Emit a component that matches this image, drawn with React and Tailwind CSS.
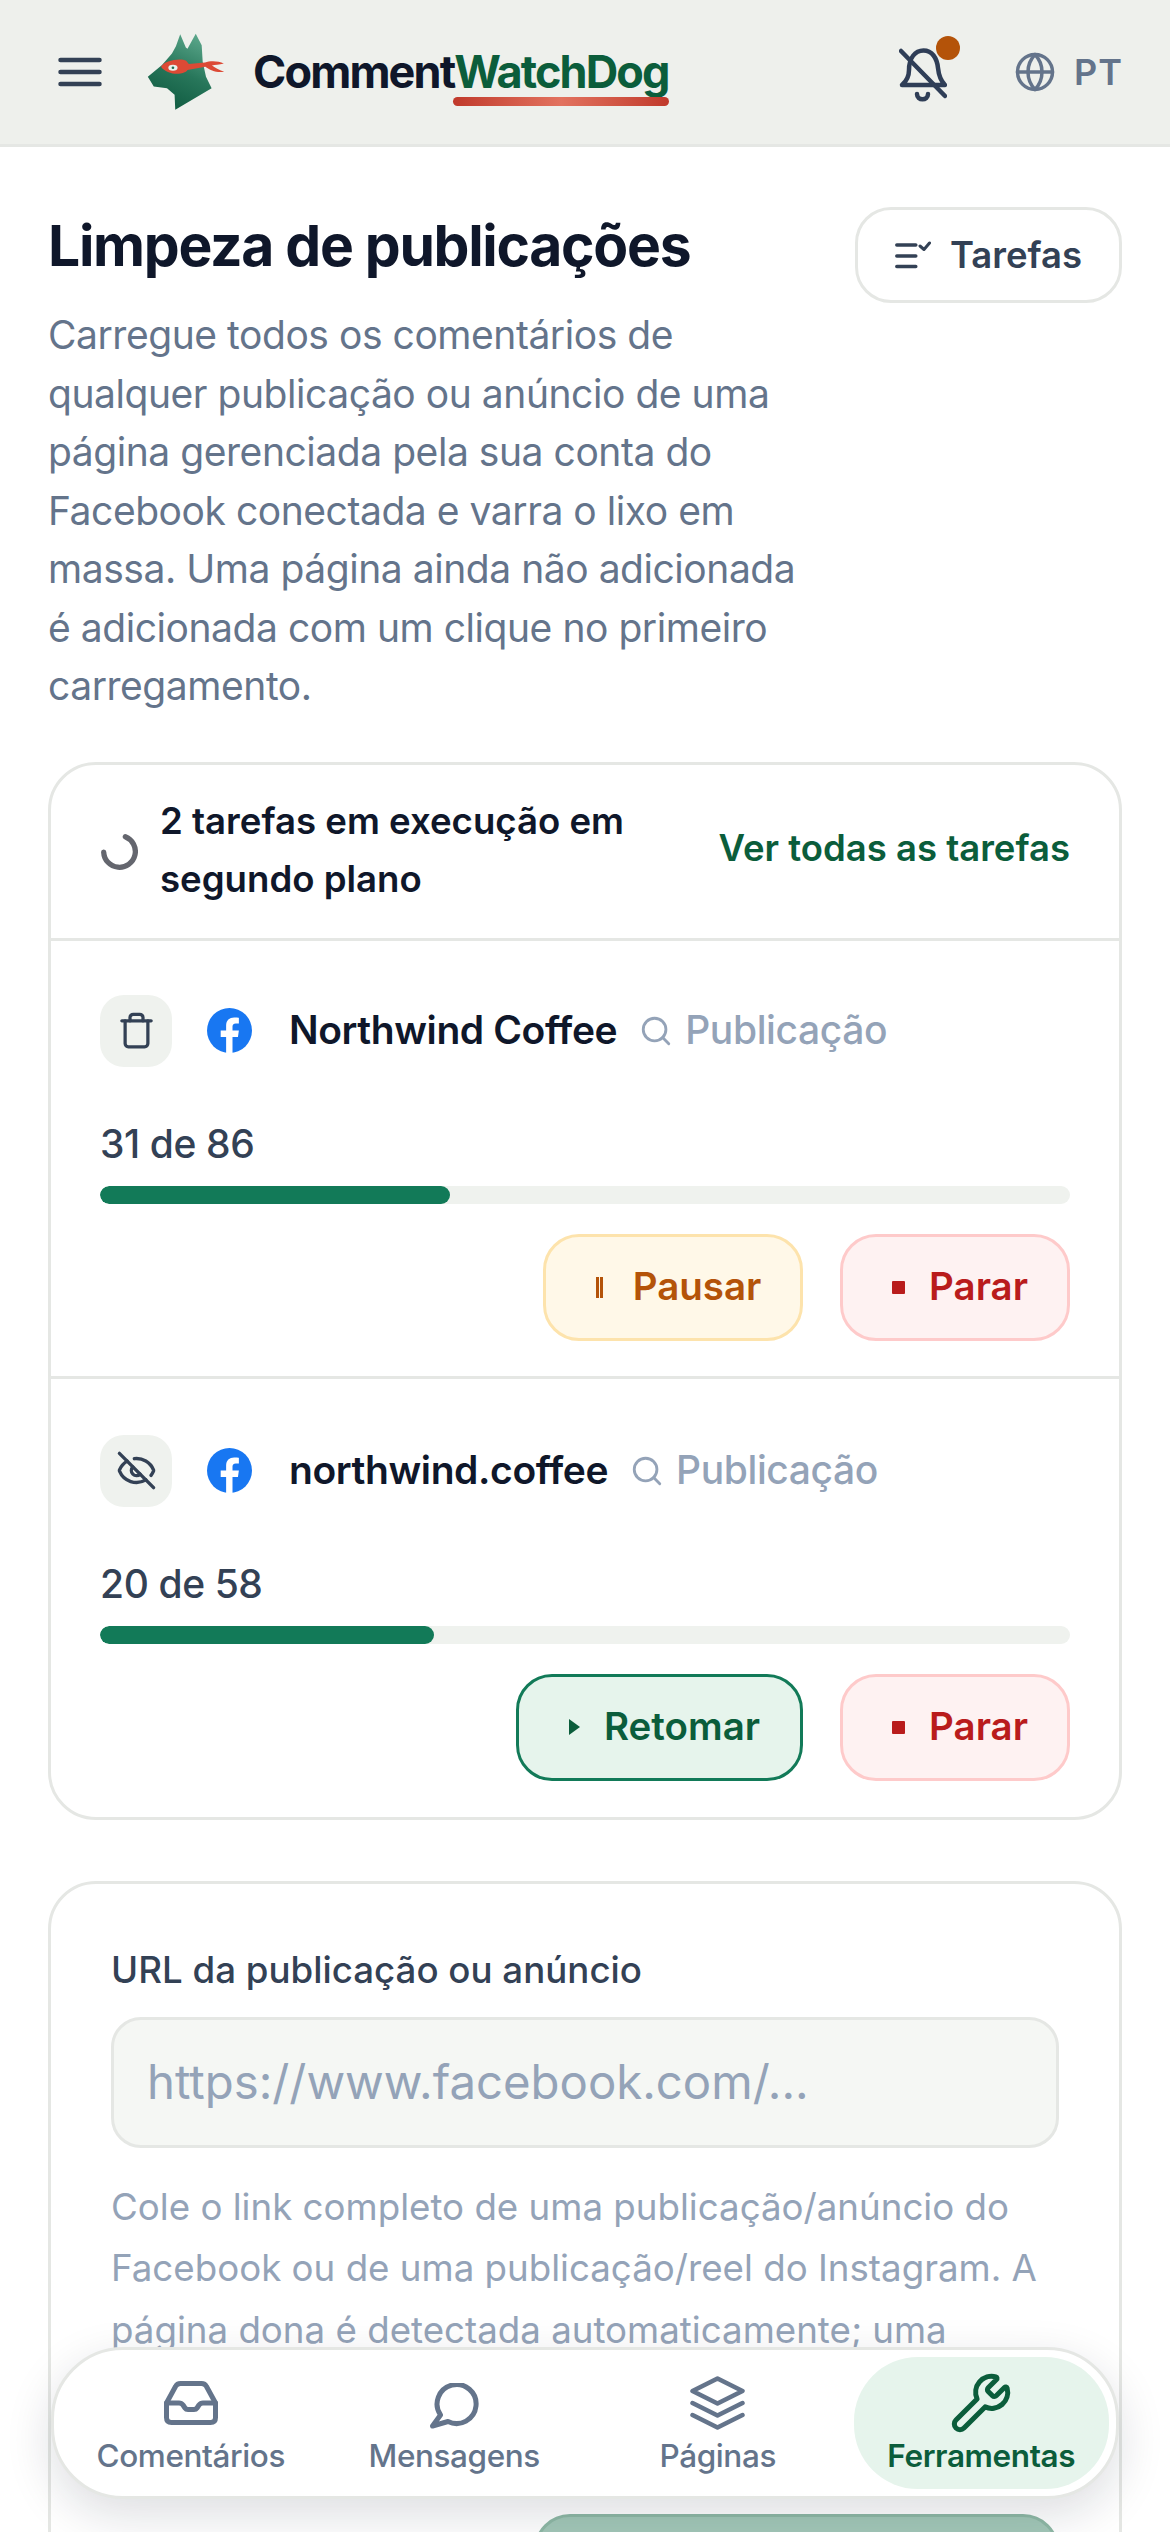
import { EyeOff, Globe, Search, Trash, Wrench } from "lucide-react";

const InboxIcon = () => (
  <svg viewBox="0 0 54 44" fill="none" stroke="currentColor" strokeWidth="5" strokeLinecap="round" strokeLinejoin="round" className="w-[54px] h-[44px]">
    <path d="M2.500 22 L11.500 5.500 Q13 2.500 16.500 2.500 H37.500 Q41 2.500 42.500 5.500 L51.500 22 V36.500 Q51.500 41.500 46.500 41.500 H7.500 Q2.500 41.500 2.500 36.500 Z" />
    <path d="M2.500 22 H15 Q17.500 22 19 24 L21 27 Q22 28.500 24 28.500 H30 Q32 28.500 33 27 L35 24 Q36.500 22 39 22 H51.500" />
  </svg>
);

const ChatIcon = () => (
  <svg viewBox="0 0 50 46" fill="none" stroke="currentColor" strokeWidth="5" strokeLinecap="round" strokeLinejoin="round" className="w-[50px] h-[46px] mt-[5px]">
    <path d="M11.500 32 A19.500 19.500 0 1 1 19 38.500 L3.500 43 Z" />
  </svg>
);

const LayersIcon = () => (
  <svg viewBox="0 0 55 54" fill="none" stroke="currentColor" strokeWidth="4.500" strokeLinecap="round" strokeLinejoin="round" className="w-[55px] h-[54px]">
    <path d="M27.500 2.500 L52.500 15 L27.500 27.500 L2.500 15 Z" />
    <path d="M2.500 27 L27.500 39.500 L52.500 27" />
    <path d="M2.500 39 L27.500 51.500 L52.500 39" />
  </svg>
);

const WrenchIcon = () => <Wrench className="w-[64px] h-[64px] -my-[4px]" strokeWidth={1.900} />;

const navItems = [
  { label: "Comentários", icon: InboxIcon },
  { label: "Mensagens", icon: ChatIcon },
  { label: "Páginas", icon: LayersIcon },
  { label: "Ferramentas", icon: WrenchIcon, active: true },
];

const DogLogo = () => (
  <svg viewBox="50 38 235 236" className="w-[78px] h-[78px] shrink-0">
    <defs>
      <linearGradient id="dogFill" x1="0.7" y1="0" x2="0.3" y2="1">
        <stop offset="0" stopColor="#5aa68a" />
        <stop offset="0.5" stopColor="#27765a" />
        <stop offset="1" stopColor="#0f5a40" />
      </linearGradient>
    </defs>
    <path d="M52 170 L95 135 L125 100 L137 78 L150 42 L167 82 L172 86 L197 40 L215 75 L218 125 L228 170 L245 205 L135 270 L133 225 L110 205 L70 200 Z" fill="url(#dogFill)" />
    <path d="M92 140 C100 122 150 112 168 122 L176 132 L225 127 C240 122 265 122 282 130 C268 134 255 134 246 136 C256 144 270 150 283 155 C262 160 240 150 226 140 L172 150 C160 168 108 165 92 140 Z" fill="#dc4a35" />
    <ellipse cx="128" cy="143" rx="14" ry="9" fill="#e8f2ec" />
    <circle cx="128" cy="143" r="4" fill="#1d6b50" />
  </svg>
);

const FacebookIcon = () => (
  <svg viewBox="0 0 24 24" className="w-[45px] h-[45px] shrink-0">
    <circle cx="12" cy="12" r="12" fill="#1877f2" />
    <path d="M13.600 24v-8.600h2.900l.5-3.400h-3.400V9.900c0-1 .4-1.700 1.800-1.700H17V5.200c-.4-.1-1.400-.2-2.500-.2-2.500 0-4.300 1.500-4.300 4.300V12H7.300v3.400h2.900V24z" fill="#ffffff" />
  </svg>
);

const MutedBell = () => (
  <svg viewBox="0 0 48 54" fill="none" stroke="#2f3e57" strokeWidth="4.500" strokeLinecap="round" strokeLinejoin="round" className="w-[48px] h-[54px]">
    <path d="M3 37 C6.500 34 10 30 10 22 C10 10 16 2.500 24.500 2.500 C33 2.500 38 10 39 20 C40 30 43 34 46 37 Z" />
    <path d="M2 3 L46 48" />
    <path d="M18 46 C18 53 29 53 29 46" />
  </svg>
);

// three bars with a small tick, used on the tasks button
const TaskListIcon = () => (
  <svg viewBox="0 0 36 28" fill="none" stroke="#334155" strokeWidth="3.500" strokeLinecap="round" strokeLinejoin="round" className="w-[36px] h-[28px] shrink-0">
    <path d="M1.800 4h19M1.800 15h19M1.800 25.500h19" />
    <path d="M25 5l4 3.500 5.500-6.500" strokeWidth="3" />
  </svg>
);

const TaskRow = ({ icon: Icon, iconClass, name, count, total, action }) => (
  <div>
    <div className="flex items-center h-[72px]">
      <div className="w-[72px] h-[72px] rounded-[24px] bg-[#eff2ee] flex items-center justify-center shrink-0">
        <Icon className={`${iconClass} text-[#334155]`} strokeWidth={2} />
      </div>
      <div className="ml-[35px]"><FacebookIcon /></div>
      <span className="ml-[37px] text-[39px] font-semibold text-[#0f172a] tracking-[-0.4px]">{name}</span>
      <Search className="ml-[22px] w-[34px] h-[34px] text-[#94a3b8]" strokeWidth={2} />
      <span className="ml-[12px] text-[39px] font-medium text-[#94a3b8] tracking-[-0.4px]">Publicação</span>
    </div>
    <p className="mt-[48px] text-[39px] leading-[58px] font-medium text-[#334155] tracking-[-0.4px]">{count} de {total}</p>
    <div className="mt-[13px] h-[18px] rounded-full bg-[#eff2ee] overflow-hidden">
      <div className="h-full rounded-full bg-[#127a58]" style={{ width: `${(count / total) * 100}%` }} />
    </div>
    <div className="mt-[30px] flex justify-end gap-[37px]">
      {action === "pause" ? (
        <button className="w-[260px] h-[107px] rounded-[36px] border-[3px] border-[#fde3ac] bg-[#fff8e8] text-[#b45309] flex items-center justify-center gap-[30px] text-[38.500px] font-semibold">
          <span className="w-[18px] h-[21px] flex justify-end gap-px">
            <span className="w-[3px] h-full bg-current" />
            <span className="w-[3px] h-full bg-current" />
          </span>
          Pausar
        </button>
      ) : (
        <button className="w-[287px] h-[107px] pl-[10px] rounded-[36px] border-[3px] border-[#127a58] bg-[#e6f4ec] text-[#0b5d3b] flex items-center justify-center gap-[24px] text-[38.500px] font-semibold">
          <svg viewBox="0 0 11 16" className="w-[11px] h-[16px] fill-current"><path d="M0 0 L11 8 L0 16 Z" /></svg>
          Retomar
        </button>
      )}
      <button className="w-[230px] h-[107px] pl-[10px] rounded-[36px] border-[3px] border-[#fecaca] bg-[#fef2f2] text-[#b91c1c] flex items-center justify-center gap-[24px] text-[38.500px] font-semibold">
        <span className="w-[13px] h-[13px] rounded-[1px] bg-current" />
        Parar
      </button>
    </div>
  </div>
);

export default function App() {
  return (
    <div className="relative h-[2532px] overflow-hidden bg-white font-['Inter',sans-serif]">
      {/* top bar */}
      <header className="h-[147px] bg-[#eef0ec] border-b-[3px] border-[#e5e7e4] flex items-center pl-[58px] pr-[47px]">
        <svg viewBox="0 0 44 30" fill="none" stroke="#334155" strokeWidth="4.500" strokeLinecap="round" className="w-[44px] h-[30px] shrink-0">
          <path d="M2.500 3h39M2.500 15h39M2.500 27h39" />
        </svg>
        <div className="ml-[45px]"><DogLogo /></div>
        <div className="relative ml-[28px] mt-[-2px] text-[45px] font-bold tracking-[-1.850px] text-[#0f172a] leading-none">
          Comment<span className="text-[#0b5d3b]">WatchDog</span>
          <div className="absolute right-0 bottom-[-12px] w-[216px] h-[9px] rounded-full bg-gradient-to-r from-[#c0392b] via-[#e2725f] to-[#c0392b]" />
        </div>
        <div className="relative ml-auto mt-[6px]">
          <MutedBell />
          <span className="absolute right-[-13px] top-[-12px] w-[24px] h-[24px] rounded-full bg-[#b45309]" />
        </div>
        <Globe className="ml-[67px] w-[42px] h-[42px] text-[#64748b]" strokeWidth={2} />
        <span className="ml-[18px] text-[36px] font-semibold text-[#64748b] tracking-[1px]">PT</span>
      </header>

      <main className="px-[48px] pt-[63px]">
        {/* heading */}
        <div className="flex items-start justify-between">
          <div className="w-[760px]">
            <h1 className="text-[57px] leading-[72px] font-bold text-[#0f172a] tracking-[-1.300px]">Limpeza de publicações</h1>
            <p className="mt-[24px] text-[39px] leading-[58.500px] text-[#64748b] tracking-[-0.45px]">
              Carregue todos os comentários de qualquer publicação ou anúncio de uma página gerenciada pela sua conta do Facebook conectada e varra o lixo em massa. Uma página ainda não adicionada é adicionada com um clique no primeiro carregamento.
            </p>
          </div>
          <button className="mt-[-3px] w-[267px] h-[96px] rounded-[36px] border-[3px] border-[#e5e7e4] bg-white flex items-center justify-center gap-[19px] text-[36.500px] font-semibold text-[#334155]">
            <TaskListIcon />
            Tarefas
          </button>
        </div>

        {/* running tasks */}
        <section className="mt-[46px] rounded-[48px] border-[3px] border-[#e5e7e4]">
          <div className="h-[176px] pl-[49px] pr-[49px] flex items-center border-b-[3px] border-[#e5e7e4]">
            <svg viewBox="0 0 36 36" fill="none" className="w-[38px] h-[38px] shrink-0">
              <path d="M24 4.500 A15 15 0 1 1 3.500 19" stroke="#64666e" strokeWidth="5" strokeLinecap="round" />
            </svg>
            <p className="ml-[22px] mt-[-2px] text-[36.600px] leading-[58px] font-semibold text-[#0f172a] w-[520px]">2 tarefas em execução em segundo plano</p>
            <span className="ml-auto mt-[-5px] text-[36.500px] font-semibold text-[#0b5d3b] whitespace-nowrap">Ver todas as tarefas</span>
          </div>
          <div className="px-[49px] pt-[54px] pb-[35px] border-b-[3px] border-[#e5e7e4]">
            <TaskRow icon={Trash} iconClass="w-[39px] h-[39px]" name="Northwind Coffee" count={31} total={86} action="pause" />
          </div>
          <div className="px-[49px] pt-[56px] pb-[36px]">
            <TaskRow icon={EyeOff} iconClass="w-[41px] h-[41px]" name="northwind.coffee" count={20} total={58} action="resume" />
          </div>
        </section>

        {/* url form */}
        <section className="mt-[61px] rounded-[48px] border-[3px] border-[#e5e7e4] px-[60px] pt-[59px]">
          <label className="block text-[36.700px] leading-[54px] font-medium text-[#334155]">URL da publicação ou anúncio</label>
          <div className="mt-[20px] h-[131px] rounded-[30px] border-[3px] border-[#e5e7e4] bg-[#f5f7f4] flex items-center px-[33px] text-[47.300px] text-[#94a3b8]">
            https://www.facebook.com/...
          </div>
          <p className="mt-[28px] text-[36.700px] leading-[61.500px] text-[#94a3b8]">
            Cole o link completo de uma publicação/anúncio do Facebook ou de uma publicação/reel do Instagram. A página dona é detectada automaticamente; uma
          </p>
          <div className="mt-[154px] flex justify-end">
            <button className="w-[525px] h-[107px] rounded-[36px] border-[3px] border-[#8fb9a6] bg-[#a3c8b8]" />
          </div>
        </section>
      </main>

      {/* floating tab bar */}
      <nav className="absolute left-[51px] right-[51px] top-[2347px] h-[152px] rounded-[72px] bg-white border-[3px] border-[#e5e7e4] shadow-[0_16px_48px_rgba(15,23,42,0.14)] grid grid-cols-4 gap-[8px] pl-[9px] pr-[7px] py-[7px]">
        {navItems.map(({ label, icon: Icon, active }) => (
          <div key={label} className={`rounded-[64px] flex flex-col items-center pt-[18px] ${active ? "bg-[#e6f4ec] text-[#0b5d3b]" : "text-[#64748b]"}`}>
            <div className="h-[56px] flex items-center justify-center"><Icon /></div>
            <span className={`mt-[5px] text-[31.500px] leading-[40px] tracking-[-0.4px] ${active ? "font-semibold" : "font-medium"}`}>{label}</span>
          </div>
        ))}
      </nav>
    </div>
  );
}
